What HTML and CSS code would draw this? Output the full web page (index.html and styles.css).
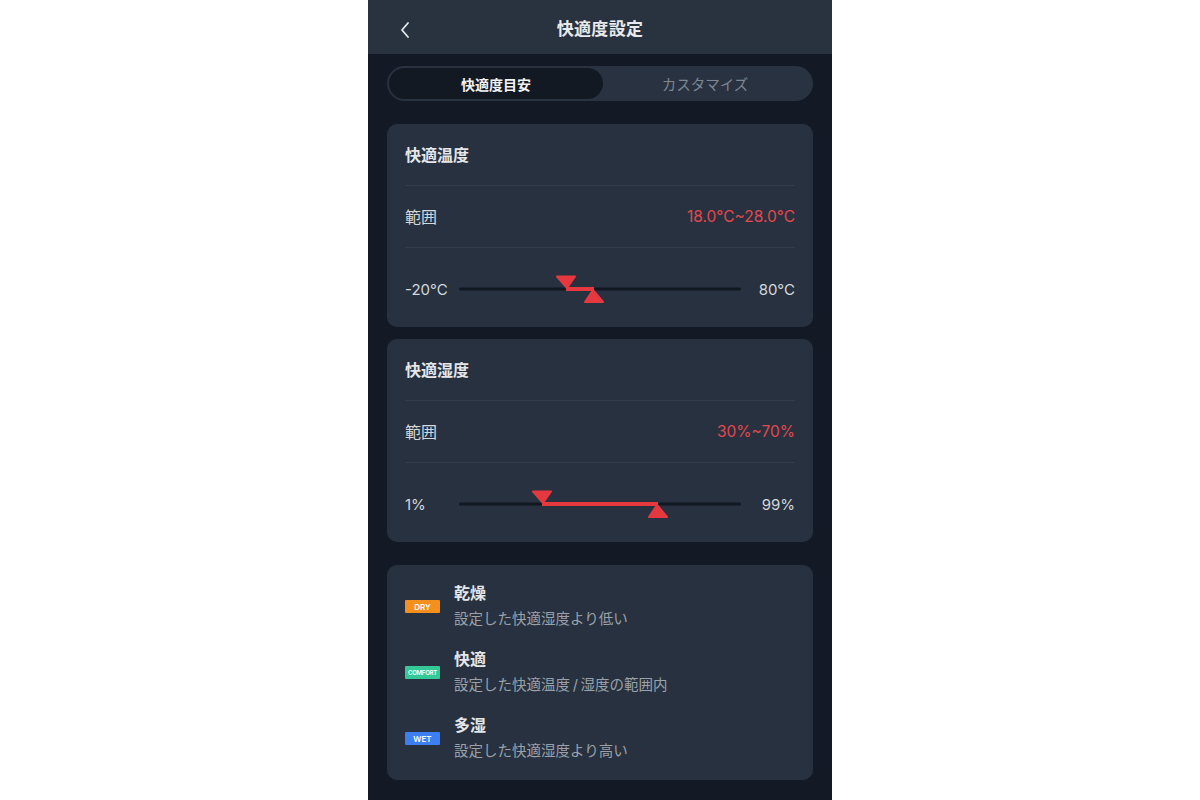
FILE: index.html
```html
<!DOCTYPE html>
<html lang="ja">
<head>
<meta charset="utf-8">
<title>快適度設定</title>
<link rel="stylesheet" href="styles.css">
</head>
<body>
<div class="phone">
  <header class="topbar">
    <span class="back">
      <svg width="12" height="18" viewBox="0 0 12 18"><path d="M9 2 L3 9 L9 16" fill="none" stroke="#e6e8eb" stroke-width="1.8" stroke-linecap="round" stroke-linejoin="round"/></svg>
    </span>
    <h1 class="title">快適度設定</h1>
  </header>
  <main class="content">
    <div class="segment">
      <div class="seg-item active">快適度目安</div>
      <div class="seg-item">カスタマイズ</div>
    </div>

    <section class="card">
      <div class="row head">快適温度</div>
      <div class="row range"><span class="label">範囲</span><span class="value">18.0°C~28.0°C</span></div>
      <div class="row slider-row">
        <span class="end">-20°C</span>
        <svg class="slider" width="282" height="30" viewBox="0 0 282 30">
          <rect x="0" y="13.5" width="282" height="3" rx="1.5" fill="#121822"/>
          <rect x="107" y="13" width="28" height="4" fill="#e5393f"/>
          <polygon points="98,2.5 116,2.5 108,14" fill="#e5393f" stroke="#e5393f" stroke-width="2" stroke-linejoin="round"/>
          <polygon points="134,16 126,28 144,28" fill="#e5393f" stroke="#e5393f" stroke-width="2" stroke-linejoin="round"/>
        </svg>
        <span class="end right">80°C</span>
      </div>
    </section>

    <section class="card">
      <div class="row head">快適湿度</div>
      <div class="row range"><span class="label">範囲</span><span class="value">30%~70%</span></div>
      <div class="row slider-row">
        <span class="end">1%</span>
        <svg class="slider" width="282" height="30" viewBox="0 0 282 30">
          <rect x="0" y="13.5" width="282" height="3" rx="1.5" fill="#121822"/>
          <rect x="83" y="13" width="116" height="4" fill="#e5393f"/>
          <polygon points="74,2.5 92,2.5 84,14" fill="#e5393f" stroke="#e5393f" stroke-width="2" stroke-linejoin="round"/>
          <polygon points="198,16 190,28 208,28" fill="#e5393f" stroke="#e5393f" stroke-width="2" stroke-linejoin="round"/>
        </svg>
        <span class="end right">99%</span>
      </div>
    </section>

    <section class="card legend">
      <div class="item">
        <span class="badge dry">DRY</span>
        <div class="texts">
          <div class="item-title">乾燥</div>
          <div class="item-sub">設定した快適湿度より低い</div>
        </div>
      </div>
      <div class="item">
        <span class="badge comfort">COMFORT</span>
        <div class="texts">
          <div class="item-title">快適</div>
          <div class="item-sub">設定した快適温度&#8201;/&#8201;湿度の範囲内</div>
        </div>
      </div>
      <div class="item">
        <span class="badge wet">WET</span>
        <div class="texts">
          <div class="item-title">多湿</div>
          <div class="item-sub">設定した快適湿度より高い</div>
        </div>
      </div>
    </section>
  </main>
</div>
</body>
</html>
```

FILE: styles.css
```css
* { box-sizing: border-box; }
html, body { margin: 0; padding: 0; }
body {
  background: #ffffff;
  font-family: "Inter", "Noto Sans CJK JP", sans-serif;
}
.phone {
  width: 464px;
  height: 800px;
  margin: 0 auto;
  background: #131a25;
  overflow: hidden;
}
.topbar {
  height: 54px;
  background: #29333f;
  display: flex;
  align-items: center;
  justify-content: center;
  position: relative;
}
.back {
  position: absolute;
  left: 31px;
  top: 21px;
  width: 12px;
  height: 18px;
  display: flex;
}
.title {
  margin: 0;
  font-size: 17px;
  font-weight: 700;
  color: #e8eaed;
  letter-spacing: 0.3px;
}
.content {
  padding: 12px 19px 0;
  display: flex;
  flex-direction: column;
}
.segment {
  height: 35px;
  border-radius: 18px;
  background: #283241;
  padding: 2px;
  display: flex;
}
.seg-item {
  flex: 1;
  display: flex;
  align-items: center;
  justify-content: center;
  font-size: 14.5px;
  color: #7e8690;
  border-radius: 16px;
  padding-right: 4px;
}
.seg-item.active {
  flex: 0 0 214px;
  background: #121923;
  color: #f2f3f5;
  font-weight: 700;
  font-size: 14px;
  padding-right: 0;
}
.card {
  background: #27313f;
  border-radius: 10px;
  padding: 0 18px;
  margin-top: 23px;
}
.card + .card { margin-top: 12px; }
.card.legend { margin-top: 23px; }
.row {
  display: flex;
  align-items: center;
}
.row.head {
  height: 62px;
  padding-bottom: 2px;
  font-size: 16px;
  font-weight: 700;
  color: #e4e6e9;
  border-bottom: 1px solid #323c4a;
}
.row.range {
  height: 62px;
  padding-bottom: 1px;
  justify-content: space-between;
  border-bottom: 1px solid #323c4a;
}
.label {
  font-size: 16px;
  color: #d5d8dc;
}
.value {
  font-size: 15.5px;
  color: #e5484d;
}
.slider-row {
  padding: 26px 0 23px;
  height: 79px;
}
.end {
  font-size: 15px;
  color: #d5d8dc;
  flex: 1;
}
.end.right { text-align: right; }
.slider { display: block; flex: 0 0 282px; }
.legend {
  padding: 16px 18px 18px;
  display: flex;
  flex-direction: column;
  gap: 17px;
}
.item {
  display: flex;
  align-items: center;
  gap: 14px;
}
.badge {
  width: 35px;
  height: 13px;
  margin-top: 2px;
  display: flex;
  align-items: center;
  justify-content: center;
  color: #ffffff;
  font-size: 8px;
  font-weight: 600;
  border-radius: 1px;
  font-family: "Inter", sans-serif;
}
.badge.comfort { font-size: 6px; letter-spacing: -0.2px; }
.dry { background: #f5901e; }
.comfort { background: #35c997; }
.wet { background: #3d7ef0; }
.texts { display: flex; flex-direction: column; }
.item-title {
  height: 24px;
  line-height: 24px;
  font-size: 16px;
  font-weight: 700;
  color: #e4e6e9;
}
.item-sub {
  margin-top: 3px;
  height: 22px;
  line-height: 22px;
  font-size: 14.5px;
  color: #9ba1a9;
}
```
